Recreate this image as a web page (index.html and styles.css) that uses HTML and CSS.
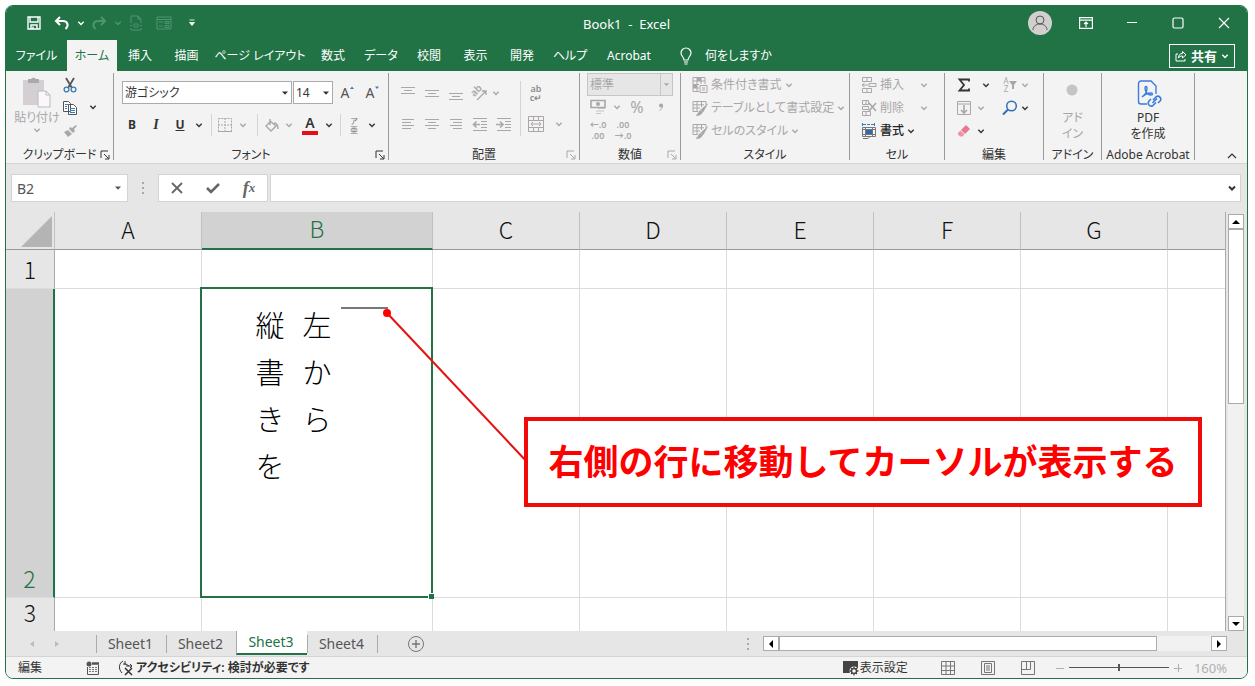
FILE: index.html
```html
<!DOCTYPE html>
<html lang="ja">
<head>
  <meta charset="UTF-8">
  <meta name="viewport" content="width=device-width, initial-scale=1.0">
  <title>Book1 - Excel</title>
  <link rel="stylesheet" href="styles.css">
</head>
<body>
  <!-- shared icon shapes -->
  <svg class="sprite" aria-hidden="true">
    <symbol id="chev" viewBox="0 0 8 8"><path d="M1.3 2.7 4 5.4l2.7-2.7" fill="none" stroke="currentColor" stroke-width="1.4"/></symbol>
    <symbol id="tri" viewBox="0 0 8 8"><path d="M1 2.5h6L4 5.8z" fill="currentColor"/></symbol>
    <symbol id="launch" viewBox="0 0 10 10"><path d="M1 8V1h7M4 4l4.500 4.500M9 5v4H5" fill="none" stroke="currentColor"/></symbol>
    <symbol id="share" viewBox="0 0 12 12"><path d="M3 4H1v7h9V9M3.500 8c0-3 1.500-4.500 4-4.500V1.500L11 4.800 7.500 8V6C5.500 6 4.300 6.500 3.500 8z" fill="none" stroke="currentColor"/></symbol>
    <symbol id="tablebrush" viewBox="0 0 16 16"><path d="M1 1.500h13V5M1 1.500v10h5M1 4.800h11M1 8h7M5 1.500v10M9.500 1.500V7" fill="none" stroke="currentColor"/><path d="M15.500 4 9 9.500 11 12zM8.500 10l2 2c-1 3-3.500 3.500-6.500 3.500 2-1 2.500-4 4.500-5.500z" fill="currentColor" stroke="currentColor" stroke-width=".6"/></symbol>
  </svg>

  <div class="window">
    <header class="titlebar">
      <div class="quick">
        <button class="ico" aria-label="保存"><svg width="14" height="14" viewBox="0 0 14 14"><path d="M1 1h12v12H1zM3 1v5h8V1M4 13V9h6v4M6 10.500v2.500" fill="none" stroke="currentColor" stroke-width="1.400"/></svg></button>
        <button class="ico" aria-label="元に戻す"><svg width="16" height="14" viewBox="0 0 16 14"><path d="M6 1 2 5l4 4M2 5h7c5 0 6 5 2.500 8" fill="none" stroke="currentColor" stroke-width="2"/></svg></button>
        <button class="arrow" aria-label="元に戻す履歴"><svg width="8" height="8"><use href="#chev"/></svg></button>
        <button class="ico dim" aria-label="やり直し"><svg width="16" height="14" viewBox="0 0 16 14"><path d="m10 1 4 4-4 4M14 5H7c-5 0-6 5-2.500 8" fill="none" stroke="currentColor" stroke-width="2"/></svg></button>
        <button class="arrow dim" aria-label="やり直し履歴"><svg width="8" height="8"><use href="#chev"/></svg></button>
        <button class="ico dim" aria-label="印刷プレビュー"><svg width="14" height="16" viewBox="0 0 14 16"><path d="M2 8V1h7l3 3v4M9 1v3h3M2 13v2h10v-2M1 10.500h2m8 0h2M5 9h4v3H5z" fill="none" stroke="currentColor"/></svg></button>
        <button class="ico dim" aria-label="フォーム"><svg width="16" height="14" viewBox="0 0 16 14"><path d="M1 1h14v12H1zM1 3.500h14M3 6h4m-4 4h4M9 5.500h4v2H9zM9 9.500h4v2H9z" fill="none" stroke="currentColor"/></svg></button>
        <button class="ico" aria-label="クイック アクセスの設定"><svg width="8" height="8" viewBox="0 0 8 8"><path d="M1.500 1h5M1.500 3.500h5L4 6.500z" fill="currentColor" stroke="currentColor" stroke-width=".8"/></svg></button>
      </div>
      <div class="title">Book1&nbsp; -&nbsp; Excel</div>
      <div class="winctl">
        <button class="avatar" aria-label="アカウント"><svg width="24" height="24" viewBox="0 0 24 24"><circle cx="12" cy="12" r="12" fill="#d2d0ce"/><circle cx="12" cy="9" r="4" fill="none" stroke="#555"/><path d="M5 19c0-8 14-8 14 0" fill="none" stroke="#555"/></svg></button>
        <button aria-label="リボンの表示"><svg width="14" height="12" viewBox="0 0 14 12"><path d="M.6.600h12.800v10.800H.6zM.6 3.200h12.800M7 10V5M5 7l2-2 2 2" fill="none" stroke="currentColor" stroke-width="1.200"/></svg></button>
        <button aria-label="最小化"><svg width="12" height="12" viewBox="0 0 12 12"><path d="M1 5.500h10" stroke="currentColor"/></svg></button>
        <button aria-label="最大化"><svg width="12" height="12" viewBox="0 0 12 12"><rect x="1" y="1" width="10" height="10" rx="1.500" fill="none" stroke="currentColor" stroke-width="1.200"/></svg></button>
        <button aria-label="閉じる"><svg width="12" height="12" viewBox="0 0 12 12"><path d="m1 1 10 10M11 1 1 11" stroke="currentColor" stroke-width="1.200"/></svg></button>
      </div>
    </header>

    <nav class="menubar">
      <div class="tabs">
        <button>ファイル</button>
        <button class="active">ホーム</button>
        <button>挿入</button>
        <button>描画</button>
        <button>ページ レイアウト</button>
        <button>数式</button>
        <button>データ</button>
        <button>校閲</button>
        <button>表示</button>
        <button>開発</button>
        <button>ヘルプ</button>
        <button>Acrobat</button>
      </div>
      <button class="tellme"><svg width="14" height="18" viewBox="0 0 14 18"><path d="M5 13c0-3-3-4-3-7a5 5 0 0 1 10 0c0 3-3 4-3 7zM5 15h4M5.500 17h3" fill="none" stroke="currentColor" stroke-width="1.200"/></svg>何をしますか</button>
      <button class="share"><svg width="12" height="12"><use href="#share"/></svg>共有<svg width="8" height="8"><use href="#chev"/></svg></button>
    </nav>

    <section class="ribbon">
      <div class="group clipboard">
        <div class="group-body">
          <button class="big off"><svg width="30" height="32" viewBox="0 0 30 32"><path d="M1 4h21v25H1z" fill="#d3cfd3"/><path d="M6 3h3a3 3 0 0 1 5 0h3v4H6z" fill="#aaa"/><path d="M16 15h8l4 4v12H16z" fill="#faf6fa" stroke="#bbb"/><path d="M24 15v4h4" fill="none" stroke="#bbb"/></svg><span>貼り付け</span><svg width="8" height="8"><use href="#chev"/></svg></button>
          <div class="stack">
            <button aria-label="切り取り"><svg width="14" height="16" viewBox="0 0 14 16"><path d="m3 1 6 10M11 1 5 11" stroke="#555" stroke-width="1.800"/><circle cx="3.500" cy="12.500" r="2.400" fill="none" stroke="#3b7cb8" stroke-width="1.300"/><circle cx="10.500" cy="12.500" r="2.400" fill="none" stroke="#3b7cb8" stroke-width="1.300"/></svg></button>
            <button aria-label="コピー"><svg width="16" height="16" viewBox="0 0 16 16"><path d="M1.500 1.500h5l2 2v8h-7zM6.500 4.500h5l3 3v7h-8z" fill="#fff" stroke="#555"/><path d="M3 4.500h3M3 6.500h2M3 8.500h2M8 8.500h5m-5 2h5m-5 2h5" stroke="#3b7cb8"/></svg></button>
            <button class="off" aria-label="書式のコピー"><svg width="14" height="14" viewBox="0 0 14 14"><path d="m13 1-4 3-2-1-1 2 4 4 2-2-1-2 3-3zM5 6 1 8l4 5 4-3z" fill="currentColor"/></svg></button>
          </div>
          <button class="arrow" aria-label="コピーのオプション"><svg width="8" height="8"><use href="#chev"/></svg></button>
        </div>
        <div class="group-label">クリップボード</div><svg class="launcher" width="10" height="10"><use href="#launch"/></svg>
      </div>

      <div class="group font">
        <div class="group-body">
          <div class="font-top">
            <div class="combo"><select aria-label="フォント"><option>游ゴシック</option></select><svg width="8" height="8"><use href="#tri"/></svg></div>
            <div class="combo"><select aria-label="フォント サイズ"><option>14</option></select><svg width="8" height="8"><use href="#tri"/></svg></div>
            <button class="size" aria-label="フォント サイズの拡大">A<svg width="6" height="15" viewBox="0 0 6 15"><path d="m1 4 2-2.500L5 4z" fill="#3b7cb8"/></svg></button>
            <button class="size" aria-label="フォント サイズの縮小">A<svg width="6" height="15" viewBox="0 0 6 15"><path d="m1 1.500 2 2.500 2-2.500z" fill="#3b7cb8"/></svg></button>
          </div>
          <div class="font-bottom">
            <button class="bold">B</button>
            <button class="italic">I</button>
            <button class="under">U</button>
            <button aria-label="下線の種類"><svg width="8" height="8"><use href="#chev"/></svg></button>
            <i class="sep"></i>
            <button class="off" aria-label="罫線"><svg width="14" height="14" viewBox="0 0 14 14"><path d="M.5.500h13v13H.5zM7 0v14M0 7h14" fill="none" stroke="currentColor" stroke-dasharray="2 1"/><path d="M0 13.500h14" stroke="currentColor"/></svg></button>
            <button class="off" aria-label="罫線の種類"><svg width="8" height="8"><use href="#chev"/></svg></button>
            <i class="sep"></i>
            <button class="off" aria-label="塗りつぶし"><svg width="14" height="14" viewBox="0 0 14 14"><path d="m5 3 6 5-5 5-5-5 5-5M5 1v6M9 5c3 0 4 2 4 6" fill="none" stroke="currentColor" stroke-width="1.400"/></svg></button>
            <button class="off" aria-label="塗りつぶしの色"><svg width="8" height="8"><use href="#chev"/></svg></button>
            <button class="color">A</button>
            <button aria-label="フォントの色"><svg width="8" height="8"><use href="#chev"/></svg></button>
            <i class="sep"></i>
            <button class="ruby" aria-label="ふりがな"><small>ア</small><small>亜</small></button>
            <button aria-label="ふりがなの設定"><svg width="8" height="8"><use href="#chev"/></svg></button>
          </div>
        </div>
        <div class="group-label">フォント</div><svg class="launcher" width="10" height="10"><use href="#launch"/></svg>
      </div>

      <div class="group align">
        <div class="group-body off">
          <div class="align-grid">
            <button aria-label="上揃え"><svg width="16" height="14" viewBox="0 0 16 14"><path d="M1 1.500h14M4 4.500h8M1 7.500h14" stroke="currentColor"/></svg></button>
            <button aria-label="上下中央揃え"><svg width="16" height="14" viewBox="0 0 16 14"><path d="M1 4.500h14M4 7.500h8M1 10.500h14" stroke="currentColor"/></svg></button>
            <button aria-label="下揃え"><svg width="16" height="14" viewBox="0 0 16 14"><path d="M1 7.500h14M4 10.500h8M1 13.500h14" stroke="currentColor"/></svg></button>
            <button aria-label="方向"><svg width="18" height="16" viewBox="0 0 18 16"><text x="1" y="9" font-size="10" font-weight="600" fill="currentColor" transform="rotate(-45 6 8)">ab</text><path d="m6 15 9-9M11 6h4v4" fill="none" stroke="currentColor" stroke-width="1.300"/></svg></button>
            <button class="chevcell" aria-label="方向の設定"><svg width="8" height="8"><use href="#chev"/></svg></button>
            <button aria-label="左揃え"><svg width="12" height="12" viewBox="0 0 12 12"><path d="M0 1.500h12M0 4.500h9M0 7.500h12M0 10.500h9" stroke="currentColor"/></svg></button>
            <button aria-label="中央揃え"><svg width="14" height="12" viewBox="0 0 14 12"><path d="M0 1.500h14M3 4.500h8M0 7.500h14M3 10.500h8" stroke="currentColor"/></svg></button>
            <button aria-label="右揃え"><svg width="12" height="12" viewBox="0 0 12 12"><path d="M0 1.500h12M3 4.500h9M0 7.500h12M3 10.500h9" stroke="currentColor"/></svg></button>
            <button aria-label="インデントを減らす"><svg width="16" height="14" viewBox="0 0 16 14"><path d="M1 1.500h14M9 4.500h6M9 7.500h6M9 10.500h6M1 13.500h14" stroke="currentColor"/><path d="M8 7.500H1.500M4.500 4.500l-3 3 3 3" fill="none" stroke="currentColor" stroke-width="1.600"/></svg></button>
            <button aria-label="インデントを増やす"><svg width="16" height="14" viewBox="0 0 16 14"><path d="M1 1.500h14M9 4.500h6M9 7.500h6M9 10.500h6M1 13.500h14" stroke="currentColor"/><path d="M0 7.500h6.500M4 4.500l3 3-3 3" fill="none" stroke="currentColor" stroke-width="1.600"/></svg></button>
          </div>
          <i class="sep tall"></i>
          <div class="merge-grid">
            <button class="wrap" aria-label="折り返して全体を表示する"><small>ab</small><small>c↵</small></button>
            <span></span>
            <button aria-label="セルを結合して中央揃え"><svg width="16" height="16" viewBox="0 0 16 16"><path d="M.5.500h15v15H.5zM0 4.500h16M0 11.500h16M5.500 0v4M10.500 0v4M5.500 12v4M10.500 12v4M3 8h10M5 6 3 8l2 2M11 6l2 2-2 2" fill="none" stroke="currentColor"/></svg></button>
            <button aria-label="セルの結合"><svg width="8" height="8"><use href="#chev"/></svg></button>
          </div>
        </div>
        <div class="group-label">配置</div><svg class="launcher off" width="10" height="10"><use href="#launch"/></svg>
      </div>

      <div class="group number">
        <div class="group-body off">
          <div class="combo"><select aria-label="表示形式" disabled><option>標準</option></select><svg width="8" height="8"><use href="#tri"/></svg></div>
          <div class="num-row">
            <button aria-label="通貨表示形式"><svg width="16" height="16" viewBox="0 0 16 16"><path d="M1 1.500h14v7H1z" fill="none" stroke="currentColor" stroke-width="1.600"/><circle cx="8" cy="5" r="2" fill="currentColor"/><path d="M8 9.500h7M6 12h8M6 14.500h5" stroke="currentColor" stroke-opacity=".6"/></svg></button>
            <button aria-label="通貨の種類"><svg width="8" height="8"><use href="#chev"/></svg></button>
            <button class="percent">%</button>
            <button class="comma" aria-label="桁区切りスタイル"><svg width="6" height="8" viewBox="0 0 6 8"><circle cx="3" cy="2.500" r="2" fill="currentColor"/><path d="M4.500 2.500c0 2.500-1 4-3 5" fill="none" stroke="currentColor"/></svg></button>
          </div>
          <div class="dec-row">
            <button class="dec"><small>←.0</small><small>.00</small></button>
            <button class="dec"><small>.00</small><small>→.0</small></button>
          </div>
        </div>
        <div class="group-label">数値</div><svg class="launcher off" width="10" height="10"><use href="#launch"/></svg>
      </div>

      <div class="group styles">
        <div class="group-body off">
          <button class="item"><svg width="16" height="16" viewBox="0 0 16 16"><path d="M1 .5h12V7M1 .5v14h6M1 4h12M1 7.500h6M1 11h6M5 .5v14M9 .5V7M8 8.500h7v7H8zM10 11h3m-3 2h3" fill="none" stroke="currentColor"/><path d="M5 1h4v3H5zM1 8h4v3H1z" fill="currentColor"/></svg>条件付き書式<svg width="8" height="8"><use href="#chev"/></svg></button>
          <button class="item"><svg width="16" height="16"><use href="#tablebrush"/></svg>テーブルとして書式設定<svg width="8" height="8"><use href="#chev"/></svg></button>
          <button class="item"><svg width="16" height="16"><use href="#tablebrush"/></svg>セルのスタイル<svg width="8" height="8"><use href="#chev"/></svg></button>
        </div>
        <div class="group-label">スタイル</div>
      </div>

      <div class="group cells">
        <div class="group-body">
          <button class="item off"><svg width="16" height="16" viewBox="0 0 16 16"><path d="M1.500.500h9v4h-9zM6 .5v4M1.500 11.500h9v4h-9zM6 11.500v4M8 6.500h7v3H8zM7 8H1M3.500 6 1 8l2.500 2" fill="none" stroke="currentColor"/></svg>挿入<svg class="far" width="8" height="8"><use href="#chev"/></svg></button>
          <button class="item off"><svg width="16" height="16" viewBox="0 0 16 16"><path d="M1.500.500h6v4h-6zM1.500 11.500h8v4h-8zM5 .5v4M5 11.500v4M1.500 6.500h6v3h-6z" fill="none" stroke="currentColor"/><path d="m8 3 7 8M15 3l-7 8" stroke="currentColor" stroke-width="1.600"/></svg>削除<svg class="far" width="8" height="8"><use href="#chev"/></svg></button>
          <button class="item"><svg width="16" height="16" viewBox="0 0 16 16"><path d="M1.500 0v3M13.500 0v3M2 1.500h12" stroke="#3b7cb8" stroke-dasharray="3 1"/><path d="M1.500 4.500h13v9h-13zM4.500 4v9M11.500 4v9M1 6.500h14M1 11.500h14M2 15.500h5l2-2" fill="none" stroke="#777"/><path d="M5 7h6v4H5z" fill="#3568a8"/></svg><b>書式</b><svg width="8" height="8"><use href="#chev"/></svg></button>
        </div>
        <div class="group-label">セル</div>
      </div>

      <div class="group editing">
        <div class="group-body">
          <div class="edit-row">
            <button aria-label="合計"><svg width="14" height="14" viewBox="0 0 14 14"><path d="M12 3.500V1.500H2.500L7 7l-4.500 5.500H12v-2" fill="none" stroke="currentColor" stroke-width="1.800"/></svg></button>
            <button class="wide" aria-label="集計方法"><svg width="8" height="8"><use href="#chev"/></svg></button>
            <button class="off sort" aria-label="並べ替えとフィルター"><span><small>A</small><small>Z</small></span><svg width="8" height="8" viewBox="0 0 8 8"><path d="M0 0h8L5 4v4H3V4z" fill="currentColor"/></svg></button>
            <button class="off" aria-label="フィルターの設定"><svg width="8" height="8"><use href="#chev"/></svg></button>
          </div>
          <div class="edit-row">
            <button class="off" aria-label="フィル"><svg width="14" height="14" viewBox="0 0 14 14"><path d="M.5.500h13v13H.5zM0 3h14" fill="none" stroke="currentColor"/><path d="M7 4v8M4 9l3 3 3-3" fill="none" stroke="currentColor" stroke-width="1.600"/></svg></button>
            <button class="off" aria-label="フィルの方向"><svg width="8" height="8"><use href="#chev"/></svg></button>
            <button aria-label="検索と選択"><svg width="16" height="16" viewBox="0 0 16 16"><circle cx="9.500" cy="6" r="4.800" fill="none" stroke="#2f6fb5" stroke-width="1.500"/><path d="M6 9.500 1 14.500" stroke="#2f6fb5" stroke-width="2"/></svg></button>
            <button aria-label="検索の設定"><svg width="8" height="8"><use href="#chev"/></svg></button>
          </div>
          <div class="edit-row">
            <button aria-label="クリア"><svg width="14" height="14" viewBox="0 0 14 14"><path d="m9 1 4 4-5 5-4-4z" fill="#e8788e"/><path d="m3.400 6.600 4 4L5.500 12.500H3l-2-2V9z" fill="#ec93a5"/></svg></button>
            <button aria-label="クリアの種類"><svg width="8" height="8"><use href="#chev"/></svg></button>
          </div>
        </div>
        <div class="group-label">編集</div>
      </div>

      <div class="group addin">
        <div class="group-body">
          <button class="big off"><svg width="30" height="32" viewBox="0 0 30 32"><circle cx="14" cy="14" r="5.500" fill="#c4c4c4"/></svg><span>アド</span><span>イン</span></button>
        </div>
        <div class="group-label">アドイン</div>
      </div>

      <div class="group acrobat">
        <div class="group-body">
          <button class="big"><svg width="30" height="32" viewBox="0 0 30 32"><path d="M14 28H8a2.500 2.500 0 0 1-2.500-2.500v-18A2.500 2.500 0 0 1 8 5h10l5 5v8M9 21c3-2 5-6 5-9 0-2-2-2-2 0 0 4 3 7 6 7 2 0 2-2 0-2-3 0-7 2-9 4z" fill="none" stroke="#3b7be0" stroke-width="1.400"/><path d="m20 24 3.500-3.500a3 3 0 0 1 4 4L25 27M24 22.500 19.500 27M23 26.500 20.500 29a3 3 0 0 1-4.500-4l2-2" fill="none" stroke="#3b7be0" stroke-width="1.600"/></svg><span>PDF</span><span>を作成</span></button>
        </div>
        <div class="group-label">Adobe Acrobat</div>
      </div>

      <button class="collapse" aria-label="リボンを折りたたむ"><svg width="10" height="8" viewBox="0 0 10 8"><path d="m1 6 4-4 4 4" fill="none" stroke="currentColor" stroke-width="1.200"/></svg></button>
    </section>

    <section class="formulabar">
      <div class="namebox"><input type="text" value="B2" aria-label="名前ボックス"><svg width="8" height="8"><use href="#tri"/></svg></div>
      <i class="dots"></i>
      <div class="fx">
        <button aria-label="キャンセル"><svg width="14" height="12" viewBox="0 0 14 12"><path d="m2 1 10 10M12 1 2 11" stroke="currentColor" stroke-width="1.800"/></svg></button>
        <button aria-label="入力"><svg width="14" height="12" viewBox="0 0 14 12"><path d="m1 6 4 4 8-8" fill="none" stroke="currentColor" stroke-width="2.600"/></svg></button>
        <button class="fn">f<small>x</small></button>
      </div>
      <div class="formula"><input type="text" aria-label="数式バー"><svg width="8" height="8" viewBox="0 0 8 8"><path d="m1 2.500 3 3 3-3" fill="none" stroke="currentColor" stroke-width="2"/></svg></div>
    </section>

    <main class="sheet">
      <table class="grid">
        <colgroup><col class="col-head"><col class="col"><col class="col-b"><col class="col"><col class="col"><col class="col"><col class="col"><col class="col"><col></colgroup>
        <thead>
          <tr><th class="corner"><svg width="32" height="32" viewBox="0 0 32 32"><path d="M32 0v31H1z" fill="#b4b4b4"/></svg></th><th>A</th><th class="on">B</th><th>C</th><th>D</th><th>E</th><th>F</th><th>G</th><th></th></tr>
        </thead>
        <tbody>
          <tr class="row1"><th>1</th><td></td><td></td><td></td><td></td><td></td><td></td><td></td><td></td></tr>
          <tr class="row2"><th class="on">2</th><td></td>
            <td class="selected">
              <div class="vertical"><p>縦書きを</p><p>左から</p><p class="caret"></p></div>
            </td><td></td><td></td><td></td><td></td><td></td><td></td></tr>
          <tr class="row3"><th>3</th><td></td><td></td><td></td><td></td><td></td><td></td><td></td><td></td></tr>
        </tbody>
      </table>
      <div class="vscroll">
        <button aria-label="上へ"><svg width="8" height="8" viewBox="0 0 8 8"><path d="M0 6h8L4 2z"/></svg></button>
        <i class="thumb"></i>
        <i class="track"></i>
        <button aria-label="下へ"><svg width="8" height="8" viewBox="0 0 8 8"><path d="M0 2h8L4 6z"/></svg></button>
      </div>
      <svg class="leader" width="150" height="162" viewBox="0 0 150 162"><path d="m5 5 142 151" stroke="#e51212" stroke-width="2"/><circle cx="5" cy="5" r="4" fill="#f00"/></svg>
      <div class="callout">右側の行に移動してカーソルが表示する</div>
    </main>

    <section class="sheetbar">
      <div class="sheetnav"><button aria-label="前のシート"><svg width="6" height="8" viewBox="0 0 6 8"><path d="M5 1v6L1 4z" fill="currentColor"/></svg></button><button aria-label="次のシート"><svg width="6" height="8" viewBox="0 0 6 8"><path d="M1 1v6l4-3z" fill="currentColor"/></svg></button></div>
      <button class="sheettab">Sheet1</button>
      <button class="sheettab">Sheet2</button>
      <button class="sheettab active">Sheet3</button>
      <button class="sheettab">Sheet4</button>
      <button class="add" aria-label="新しいシート"><svg width="18" height="18" viewBox="0 0 18 18"><circle cx="9" cy="9" r="7.500" fill="none" stroke="currentColor"/><path d="M9 5v8M5 9h8" stroke="currentColor" stroke-width="1.400"/></svg></button>
      <i class="dots"></i>
      <div class="hscroll">
        <button aria-label="左へ"><svg width="8" height="8" viewBox="0 0 8 8"><path d="M6 0v8L2 4z"/></svg></button>
        <i class="thumb"></i>
        <i class="track"></i>
        <button aria-label="右へ"><svg width="8" height="8" viewBox="0 0 8 8"><path d="M2 0v8l4-4z"/></svg></button>
      </div>
    </section>

    <footer class="statusbar">
      <span class="mode">編集</span>
      <svg class="macro" width="14" height="14" viewBox="0 0 14 14"><circle cx="3" cy="3" r="2.500" fill="#555"/><path d="M6 2.500h7" stroke="#555" stroke-width="2.500"/><path d="M1.500 6v7.500h11V4" fill="none" stroke="#555"/><path d="M3 6.500h8M3 8.500h8M3 10.500h8" stroke="#777" stroke-dasharray="2 1"/></svg>
      <button class="access"><svg width="16" height="16" viewBox="0 0 16 16"><path d="M5 1C1 3 0 9 4 13M7 1v4M5 4h3l3 2M8 6h6M12 4l2 2-2 2" fill="none" stroke="currentColor"/><path d="m7 8 7 7M14 8l-7 7" stroke="currentColor" stroke-width="1.500"/></svg>アクセシビリティ: 検討が必要です</button>
      <button class="display"><svg width="16" height="16" viewBox="0 0 16 16"><path d="M0 1h15v9H9l-2 3H0z" fill="#444"/><circle cx="11" cy="11" r="3.500" fill="#fff" stroke="#fff" stroke-width="2"/><circle cx="11" cy="11" r="2.500" fill="#fff" stroke="#444" stroke-width="1.500"/><path d="M11 6.500V8M11 14v1.500M6.500 11H8M14 11h1.500M8 8l1 1M14 14l-1-1M14 8l-1 1M8 14l1-1" stroke="#444" stroke-width="1.300"/></svg>表示設定</button>
      <div class="views">
        <button aria-label="標準"><svg width="14" height="14" viewBox="0 0 14 14"><path d="M.5.500h13v13H.5zM5 0v14M9.500 0v14M0 5h14M0 9.500h14" fill="none" stroke="currentColor"/></svg></button>
        <button aria-label="ページ レイアウト"><svg width="14" height="14" viewBox="0 0 14 14"><path d="M.5.500h13v13H.5zM3.500 2.500h7v9h-7zM5 5h4M5 7h4M5 9h4" fill="none" stroke="currentColor"/></svg></button>
        <button aria-label="改ページ プレビュー"><svg width="14" height="14" viewBox="0 0 14 14"><path d="M.5.500h13v13H.5zM.5 8.500h9v-8M5.500.500v8" fill="none" stroke="currentColor"/></svg></button>
      </div>
      <div class="zoom">
        <button aria-label="縮小"><svg width="8" height="8" viewBox="0 0 8 8"><path d="M0 4.500h8" stroke="currentColor"/></svg></button>
        <input type="range" min="0" max="100" value="50" aria-label="ズーム">
        <button aria-label="拡大"><svg width="8" height="8" viewBox="0 0 8 8"><path d="M0 4.500h8M4.500 0v8" stroke="currentColor"/></svg></button>
        <span>160%</span>
      </div>
    </footer>
  </div>
</body>
</html>
```
FILE: styles.css
```css
:root {
  --green: #217346;
  --ribbon: #f3f3f3;
  --bar: #e6e6e6;
  --text: #333333;
  --off: #aaa6aa;
  --line: #d4d4d4;
  --ui: "Noto Sans", "Noto Sans CJK JP", sans-serif;
}
* {
  box-sizing: border-box;
}
body {
  margin: 0;
  padding: 5px 7px 7px 5px;
  height: 100vh;
  background: #ffffff;
  font-family: var(--ui);
  font-size: 12px;
  line-height: 16px;
  color: var(--text);
  font-feature-settings: "palt";
}
button, input, select {
  font: inherit;
  font-feature-settings: inherit;
  color: inherit;
  background: none;
  border: none;
  padding: 0;
  margin: 0;
}
button {
  display: flex;
  align-items: center;
  justify-content: center;
  white-space: nowrap;
}
svg {
  display: block;
  flex: none;
}
p {
  margin: 0;
}
.sprite {
  position: absolute;
  width: 0;
  height: 0;
}
.off {
  color: var(--off);
}
.window {
  height: 100%;
  display: flex;
  flex-direction: column;
  border: 1px solid var(--green);
  border-radius: 8px;
  overflow: hidden;
  background: var(--bar);
}

/* title bar */
.titlebar {
  display: grid;
  grid-template-columns: 1fr auto 1fr;
  align-items: center;
  height: 34px;
  background: var(--green);
  color: #ffffff;
}
.quick {
  display: flex;
  align-items: center;
  padding-left: 14px;
}
.quick .ico {
  width: 28px;
}
.quick .arrow {
  width: 9px;
}
.quick .dim {
  color: #4f9470;
}
.title {
  padding-top: 2px;
  font-size: 13px;
}
.winctl {
  display: flex;
  align-items: center;
  justify-content: flex-end;
}
.winctl button {
  width: 46px;
}

/* ribbon tabs */
.menubar {
  display: flex;
  height: 31px;
  background: var(--green);
  color: #ffffff;
}
.tabs {
  display: grid;
  grid-template-columns: 61px 50px 46px 47px 100px 46px 50px 46px 47px 46px 50px 68px;
}
.tabs .active {
  background: var(--ribbon);
  color: var(--green);
}
.tellme {
  gap: 12px;
  padding-left: 16px;
}
.share {
  margin: 4px 12px 3px auto;
  width: 66px;
  gap: 4px;
  border: 1px solid #ffffff;
  font-size: 13px;
  font-weight: 700;
}

/* ribbon */
.ribbon {
  display: flex;
  height: 93px;
  padding: 2px 0 3px;
  background: var(--ribbon);
  border-bottom: 1px solid var(--line);
}
.group {
  position: relative;
  display: flex;
  flex-direction: column;
  border-right: 1px solid #9a9a9a;
}
.group-body {
  flex: 1;
  min-height: 0;
}
.group-label {
  height: 14px;
  line-height: 18px;
  text-align: center;
  white-space: nowrap;
}
.launcher {
  position: absolute;
  right: 3px;
  bottom: 0;
}
.sep {
  width: 1px;
  height: 22px;
  margin: auto;
  background: var(--line);
}
.big {
  flex-direction: column;
  justify-content: flex-start;
  padding-top: 3px;
}
.big span:first-of-type {
  margin-top: 2px;
}
.clipboard { width: 108px; }
.font { width: 275px; }
.align { width: 191px; }
.number { width: 101px; }
.styles { width: 169px; }
.cells { width: 95px; }
.editing { width: 99px; }
.addin { width: 58px; }
.acrobat { width: 93px; }

.clipboard .group-body {
  display: flex;
  padding-left: 8px;
}
.clipboard .big {
  width: 46px;
}
.stack {
  display: grid;
  grid-template-rows: repeat(3, 23px);
  width: 20px;
}
.clipboard .arrow {
  width: 26px;
  height: 68px;
}

.combo {
  position: relative;
  height: 23px;
  background: #ffffff;
  border: 1px solid #ababab;
}
.combo select {
  appearance: none;
  width: 100%;
  height: 100%;
  padding-left: 2px;
}
.combo svg {
  position: absolute;
  right: 2px;
  top: 7px;
}
.font .group-body {
  padding: 8px 0 0 6px;
}
.font-top {
  display: grid;
  grid-template-columns: 170px 40px 24px 24px;
  column-gap: 1px;
  padding-left: 2px;
}
.size {
  padding-left: 4px;
  font-size: 14px;
  color: #555555;
}
.font-bottom {
  display: grid;
  grid-template-columns: 24px 24px 24px 14px 10px 18px 18px 10px 20px 14px 28px 10px 12px 16px 20px;
  height: 24px;
  margin-top: 8px;
}
.bold {
  font-weight: 700;
}
.italic {
  font-family: "Liberation Serif", serif;
  font-size: 14px;
  font-weight: 700;
  font-style: italic;
}
.under {
  font-weight: 700;
  text-decoration: underline;
}
.color {
  margin: 3px 6px;
  border-bottom: 4px solid #e80c14;
  font-size: 14px;
  font-weight: 600;
}
.ruby, .wrap, .dec {
  flex-direction: column;
}
.ruby small {
  font-size: 8px;
  line-height: 9px;
  color: #777777;
}

.align .group-body {
  display: flex;
  padding: 8px 0 0 7px;
}
.align-grid {
  display: grid;
  grid-template-columns: repeat(5, 24px);
  grid-template-rows: 23px 24px;
  row-gap: 8px;
}
.align-grid .chevcell {
  justify-content: flex-start;
}
.sep.tall {
  height: 55px;
  margin: 0 4px;
}
.merge-grid {
  display: grid;
  grid-template-columns: 22px 24px;
  grid-template-rows: 23px 24px;
  row-gap: 8px;
}
.wrap small {
  font-size: 9px;
  line-height: 9px;
  font-weight: 600;
  color: #8c8c8c;
}

.number .group-body {
  padding-left: 7px;
}
.number .combo {
  width: 86px;
  background: #e6e6e6;
  border-color: #c6c6c6;
}
.number .combo svg {
  width: 12px;
  height: 21px;
  right: 0;
  top: 0;
  padding: 0 2px;
  border-left: 1px solid #c6c6c6;
}
.number select {
  opacity: 1;
}
.num-row {
  display: grid;
  grid-template-columns: 22px 15px 26px 22px;
  height: 22px;
}
.percent {
  font-size: 16px;
}
.dec-row {
  display: grid;
  grid-template-columns: 22px 28px;
  height: 24px;
}
.dec small {
  font-size: 9px;
  line-height: 11px;
  font-weight: 600;
}

.styles .group-body, .cells .group-body {
  padding-left: 11px;
}
.item {
  height: 23px;
  gap: 3px;
}
.item b {
  font-weight: 500;
  color: #222222;
}
.item .far {
  margin-left: 13px;
}

.editing .group-body {
  padding-left: 8px;
}
.edit-row {
  display: grid;
  grid-template-columns: 22px 12px 32px 12px;
  height: 23px;
}
.edit-row .wide {
  width: 22px;
}
.edit-row button:nth-child(3) {
  padding-left: 14px;
}
.sort span {
  display: flex;
  flex-direction: column;
}
.sort small {
  font-size: 8px;
  line-height: 8px;
}
.addin .big, .acrobat .big {
  width: 100%;
}
.collapse {
  margin: auto 10px 0 auto;
}

/* formula bar */
.formulabar {
  display: flex;
  align-items: center;
  height: 48px;
  padding: 0 6px 0 5px;
}
.namebox, .formula, .fx {
  display: flex;
  align-items: center;
  height: 28px;
  background: #ffffff;
  border: 1px solid var(--line);
}
.namebox {
  width: 117px;
  padding: 0 5px;
  font-size: 14px;
  color: #555555;
}
.namebox input, .formula input {
  flex: 1;
  min-width: 0;
}
.namebox input {
  padding-top: 2px;
}
.dots {
  width: 2px;
  height: 12px;
  margin: 0 14px;
  background: repeating-linear-gradient(#aaaaaa 0 2px, transparent 2px 5px);
}
.fx {
  width: 110px;
  color: #666666;
}
.fx button {
  width: 36px;
}
.fn {
  font-family: "Liberation Serif", serif;
  font-size: 18px;
  font-style: italic;
  font-weight: 700;
}
.fn small {
  font-size: 13px;
}
.formula {
  flex: 1;
  margin-left: 2px;
  padding-right: 4px;
}

/* worksheet */
.sheet {
  position: relative;
  flex: 1;
  min-height: 0;
  display: flex;
  overflow: hidden;
}
.grid {
  flex: 1;
  width: 100%;
  height: 100%;
  table-layout: fixed;
  border-collapse: separate;
  border-spacing: 0;
  background: #ffffff;
  border-right: 1px solid #ababab;
  border-bottom: 1px solid #ababab;
}
.col-head { width: 49px; }
.col { width: 147px; }
.col-b { width: 231px; }
.grid th, .grid td {
  padding: 0;
  border-right: 1px solid #dcdcdc;
  border-bottom: 1px solid #dcdcdc;
}
.grid th {
  background: var(--bar);
  font-family: "Noto Sans CJK JP", sans-serif;
  font-size: 23px;
  line-height: 28px;
  font-weight: 300;
  color: #111111;
}
.grid thead th {
  height: 38px;
  padding-bottom: 4px;
  border-right-color: #c0c0c0;
  border-bottom-color: #9a9a9a;
}
.grid tbody th {
  padding-bottom: 5px;
  border-right-color: #ababab;
  vertical-align: bottom;
}
.grid tr > :last-child {
  border-right: none;
}
.grid .on {
  background: #d2d2d2;
  color: var(--green);
}
.grid thead .on {
  border-bottom: 2px solid var(--green);
}
.grid tbody .on {
  border-right: 2px solid var(--green);
}
.grid thead .corner {
  padding: 2px 2px 0 0;
}
.corner svg {
  margin-left: auto;
}
.row1 { height: 39px; }
.row2 { height: 309px; }
.grid .row3 th, .grid .row3 td {
  border-bottom: none;
}
.selected {
  position: relative;
  vertical-align: top;
}
.selected::before {
  content: "";
  position: absolute;
  inset: -2px -1px -1px -2px;
  border: 2px solid var(--green);
}
.selected::after {
  content: "";
  position: absolute;
  right: -2px;
  bottom: -2px;
  width: 5px;
  height: 5px;
  background: var(--green);
  border: 1px solid #ffffff;
  border-width: 1px 0 0 1px;
}
.vertical {
  display: flex;
  justify-content: center;
  padding-top: 12px;
}
.vertical p {
  width: 47px;
  padding: 0 9px;
  font-family: "Noto Sans CJK JP", sans-serif;
  font-size: 29px;
  font-weight: 300;
  line-height: 47px;
  color: #000000;
  font-feature-settings: normal;
  word-break: break-all;
}
.vertical .caret {
  height: 2px;
  margin-top: 6px;
  background: #777777;
}
.vscroll {
  display: flex;
  flex-direction: column;
  width: 21px;
  padding: 2px 3px 0 2px;
}
.vscroll button, .hscroll button {
  width: 16px;
  height: 15px;
  background: #ffffff;
  border: 1px solid #ababab;
}
.thumb {
  background: #ffffff;
  border: 1px solid #ababab;
}
.track {
  background: #f1f1f1;
}
.vscroll .thumb {
  flex: 174;
}
.vscroll .track {
  flex: 214;
}
.leader {
  position: absolute;
  left: 376px;
  top: 96px;
}
.callout {
  position: absolute;
  left: 518px;
  right: 45px;
  top: 205px;
  height: 90px;
  border: 4px solid #f00a0a;
  background: #ffffff;
  font-family: "Noto Sans CJK JP", sans-serif;
  font-size: 35px;
  font-weight: 700;
  line-height: 78px;
  text-align: center;
  color: #ff0000;
  font-feature-settings: normal;
  white-space: nowrap;
}

/* sheet tabs */
.sheetbar {
  display: flex;
  align-items: center;
  height: 26px;
  padding-right: 20px;
  border-bottom: 1px solid var(--line);
}
.sheetnav {
  display: flex;
  width: 90px;
  gap: 19px;
  padding-left: 23px;
  color: #bbbbbb;
}
.sheettab {
  width: 70px;
  height: 18px;
  padding-right: 2px;
  font-size: 14px;
  color: #555555;
  border-left: 1px solid #ababab;
}
.sheettab.active {
  width: 71px;
  height: 24px;
  align-self: flex-start;
  background: #ffffff;
  border-bottom: 2px solid var(--green);
  color: var(--green);
}
.add {
  width: 76px;
  height: 18px;
  border-left: 1px solid #ababab;
  color: #777777;
}
.sheetbar .dots {
  margin: 0 14px 0 auto;
}
.hscroll {
  display: flex;
  width: 38%;
}
.hscroll .thumb {
  flex: 378;
}
.hscroll .track {
  flex: 54;
}

/* status bar */
.statusbar {
  display: flex;
  align-items: center;
  height: 21px;
  padding: 0 20px 0 12px;
  background: var(--ribbon);
}
.macro {
  margin: 0 18px 0 44px;
}
.access {
  font-weight: 600;
  gap: 2px;
}
.display {
  margin-left: auto;
  gap: 1px;
}
.views {
  display: flex;
  gap: 26px;
  margin: 0 21px 0 33px;
  color: #777777;
}
.zoom {
  display: flex;
  align-items: center;
  gap: 5px;
  color: #b0b0b0;
}
.zoom input {
  appearance: none;
  width: 100px;
  height: 8px;
  background: linear-gradient(#555555, #555555) center / 100% 1px no-repeat;
}
.zoom input::-webkit-slider-thumb {
  appearance: none;
  width: 2px;
  height: 7px;
  background: #555555;
}
.zoom span {
  margin-left: 7px;
  font-size: 13px;
}
```
